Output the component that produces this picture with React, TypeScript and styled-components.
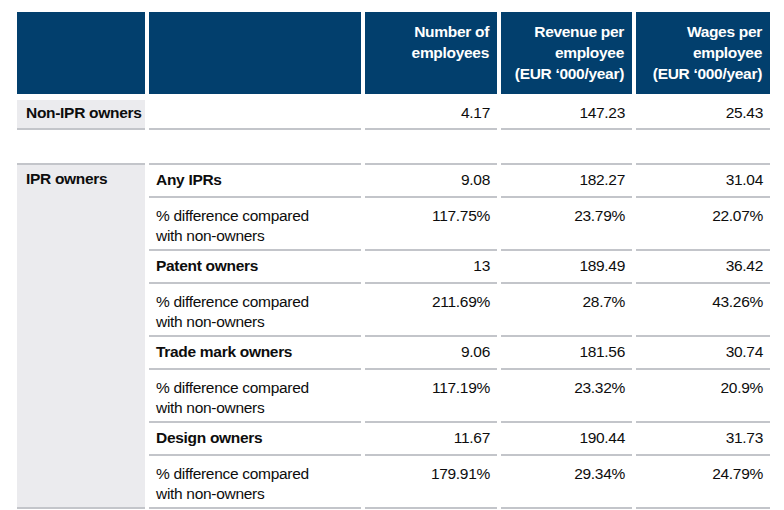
import React from "react";
import styled, { createGlobalStyle, css } from "styled-components";

const GlobalStyle = createGlobalStyle`
  html, body {
    margin: 0;
    padding: 0;
    background: #ffffff;
  }

  body {
    font-family: "Liberation Sans", Arial, sans-serif;
    font-size: 15.5px;
    letter-spacing: -0.3px;
    color: #0d0d0d;
  }
`;

const NAVY = "#023f6d";
const RULE = "#c3c5ca";
const SHADE = "#ebebee";

type Kind = "single" | "bold" | "pct";

// total row heights, bottom rule included
const heights: Record<Kind, number> = {
  single: 30,
  bold: 33,
  pct: 53,
};

const paddings: Record<Kind, number> = {
  single: 3,
  bold: 5,
  pct: 8,
};

const StyledTable = styled.div`
  display: grid;
  grid-template-columns: 128px 212px 132px 131px 134px;
  column-gap: 4px;
  padding: 12px 0 0 17px;
  line-height: 20px;
`;

const StyledHeadCell = styled.div`
  box-sizing: border-box;
  height: 82px;
  margin-bottom: 6px;
  padding: 9px 8px 0 8px;

  background: ${NAVY};
  color: #ffffff;
  font-weight: 700;
  line-height: 21px;
  text-align: right;
`;

const StyledCell = styled.div<{
  $kind: Kind;
  $top?: boolean;
  $bold?: boolean;
  $num?: boolean;
}>`
  box-sizing: border-box;
  height: ${(p) => heights[p.$kind] + (p.$top ? 2 : 0)}px;
  padding: ${(p) => paddings[p.$kind]}px 7px 0 7px;

  border-bottom: 2px solid ${RULE};
  ${(p) =>
    p.$top &&
    css`
      border-top: 2px solid ${RULE};
    `}

  font-weight: ${(p) => (p.$bold ? 700 : 400)};
  text-align: ${(p) => (p.$num ? "right" : "left")};
`;

const StyledGroupCell = styled.div<{ $span: number; $top?: boolean }>`
  box-sizing: border-box;
  grid-row: span ${(p) => p.$span};
  padding: ${(p) => (p.$top ? 4 : 3)}px 9px 0 9px;

  background: ${SHADE};
  border-bottom: 2px solid ${RULE};
  ${(p) =>
    p.$top &&
    css`
      border-top: 2px solid ${RULE};
    `}

  font-weight: 700;
  white-space: nowrap;
`;

const StyledSpacer = styled.div`
  grid-column: 1 / -1;
  height: 33px;
`;

type Group = {
  label: string;
  values: string[];
  diff: string[];
};

const groups: Group[] = [
  { label: "Any IPRs", values: ["9.08", "182.27", "31.04"], diff: ["117.75%", "23.79%", "22.07%"] },
  { label: "Patent owners", values: ["13", "189.49", "36.42"], diff: ["211.69%", "28.7%", "43.26%"] },
  { label: "Trade mark owners", values: ["9.06", "181.56", "30.74"], diff: ["117.19%", "23.32%", "20.9%"] },
  { label: "Design owners", values: ["11.67", "190.44", "31.73"], diff: ["179.91%", "29.34%", "24.79%"] },
];

const App: React.FC = () => {
  return (
    <>
      <GlobalStyle />
      <StyledTable>
        <StyledHeadCell />
        <StyledHeadCell />
        <StyledHeadCell>
          Number of
          <br />
          employees
        </StyledHeadCell>
        <StyledHeadCell>
          Revenue per
          <br />
          employee
          <br />
          (EUR ‘000/year)
        </StyledHeadCell>
        <StyledHeadCell>
          Wages per
          <br />
          employee
          <br />
          (EUR ‘000/year)
        </StyledHeadCell>

        <StyledGroupCell $span={1}>Non-IPR owners</StyledGroupCell>
        <StyledCell $kind="single" />
        <StyledCell $kind="single" $num>4.17</StyledCell>
        <StyledCell $kind="single" $num>147.23</StyledCell>
        <StyledCell $kind="single" $num>25.43</StyledCell>

        <StyledSpacer />

        <StyledGroupCell $span={groups.length * 2} $top>
          IPR owners
        </StyledGroupCell>
        {groups.map((g, i) => (
          <React.Fragment key={g.label}>
            <StyledCell $kind="bold" $top={i === 0} $bold>
              {g.label}
            </StyledCell>
            {g.values.map((v, j) => (
              <StyledCell key={j} $kind="bold" $top={i === 0} $num>
                {v}
              </StyledCell>
            ))}
            <StyledCell $kind="pct">
              % difference compared
              <br />
              with non-owners
            </StyledCell>
            {g.diff.map((v, j) => (
              <StyledCell key={j} $kind="pct" $num>
                {v}
              </StyledCell>
            ))}
          </React.Fragment>
        ))}
      </StyledTable>
    </>
  );
};

export default App;
